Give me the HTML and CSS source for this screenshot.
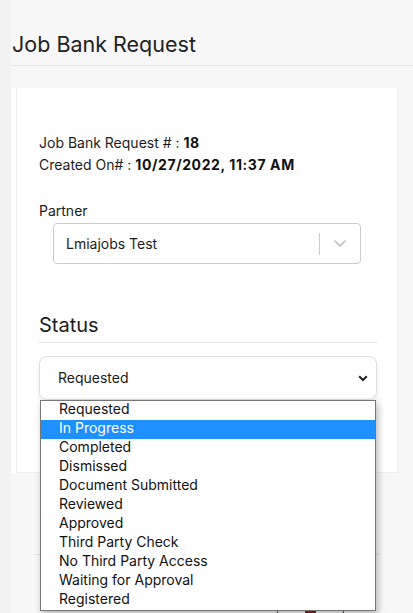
FILE: index.html
```html
<!DOCTYPE html>
<html>
<head>
<meta charset="utf-8">
<link rel="stylesheet" href="styles.css">
</head>
<body>
<div class="layout">
  <div class="sidebar"></div>
  <main class="main">
    <header class="page-header">
      <h1 class="page-title">Job Bank Request</h1>
    </header>
    <section class="panel">
      <div class="card">
        <div class="meta">
          <div class="meta-line">Job Bank Request # : <b>18</b></div>
          <div class="meta-line">Created On# : <b>10/27/2022, 11:37 AM</b></div>
        </div>
        <label class="field-label">Partner</label>
        <div class="partner-select">
          <span class="partner-value">Lmiajobs Test</span>
          <span class="partner-sep"></span>
          <span class="partner-arrow">
            <svg width="14" height="9" viewBox="0 0 14 9"><polyline points="1.5,1.5 7,7 12.5,1.5" fill="none" stroke="#cccccc" stroke-width="2.2"/></svg>
          </span>
        </div>
        <h2 class="section-title">Status</h2>
        <div class="status-wrap">
          <div class="status-select">
            <span class="status-value">Requested</span>
            <svg class="status-arrow" width="10" height="7" viewBox="0 0 10 7"><polyline points="1.2,1.2 5,5 8.8,1.2" fill="none" stroke="#222" stroke-width="2"/></svg>
          </div>
          <ul class="status-list">
            <li class="opt">Requested</li>
            <li class="opt opt-active">In Progress</li>
            <li class="opt">Completed</li>
            <li class="opt">Dismissed</li>
            <li class="opt">Document Submitted</li>
            <li class="opt">Reviewed</li>
            <li class="opt">Approved</li>
            <li class="opt">Third Party Check</li>
            <li class="opt">No Third Party Access</li>
            <li class="opt">Waiting for Approval</li>
            <li class="opt">Registered</li>
          </ul>
        </div>
      </div>
    </section>
    <section class="lower">
      <hr class="lower-rule">
      <div class="actions">
        <span class="btn-outline"><span class="btn-mark"></span></span>
      </div>
    </section>
  </main>
</div>
</body>
</html>
```
FILE: styles.css
```css
* { box-sizing: border-box; }
html, body { margin: 0; padding: 0; }
body {
  background: #f7f7f7;
  font-family: Inter, "Noto Sans", sans-serif;
  color: #1c1c1c;
  width: 413px;
  height: 613px;
  overflow: hidden;
}
.layout { display: flex; min-height: 613px; }
.sidebar { width: 11px; background: #f2f2f2; flex: none; }
.main { flex: 1; min-width: 0; }
.page-header {
  height: 66px;
  border-bottom: 1px solid #e5e5e5;
  display: flex;
  align-items: flex-end;
}
.page-title {
  margin: 0 0 7px 1px;
  font-size: 21.5px;
  font-weight: 400;
  line-height: 28px;
  color: #222;
}
.panel {
  margin-top: 22px;
  margin-right: 15px;
  background: #fff;
  padding-left: 5px;
  border-right: 1px solid #eeeeee;
}
.card {
  height: 385px;
  border-left: 1px solid #eeeeee;
  border-bottom: 1px solid #eeeeee;
  padding: 44px 20px 0 22px;
}
.meta-line { font-size: 14px; line-height: 22px; }
.meta-line b { font-weight: 700; color: #111; letter-spacing: 0.6px; }
.field-label {
  display: block;
  margin-top: 24px;
  font-size: 14px;
  line-height: 22px;
}
.partner-select {
  margin: 1px 0 0 14px;
  width: 308px;
  height: 41px;
  border: 1px solid #cccccc;
  border-radius: 4px;
  display: flex;
  align-items: center;
}
.partner-value { flex: 1; padding-left: 12px; font-size: 14px; }
.partner-sep { width: 1px; height: 22px; background: #cccccc; }
.partner-arrow {
  width: 40px;
  display: flex;
  justify-content: center;
  align-items: center;
}
.section-title {
  margin: 49px 0 0 0;
  font-size: 20px;
  font-weight: 400;
  line-height: 24px;
  padding-bottom: 5px;
  border-bottom: 1px solid #e5e5e5;
}
.status-wrap { position: relative; margin-top: 13px; }
.status-select {
  height: 44px;
  border: 1px solid #dedede;
  border-radius: 8px;
  box-shadow: 0 3px 6px rgba(0,0,0,0.08);
  display: flex;
  align-items: center;
  padding: 0 8px 2px 18px;
}
.status-value { flex: 1; font-size: 14px; }
.status-arrow { margin-top: 2px; }
.status-list {
  position: absolute;
  left: 1px;
  right: 1px;
  top: 44px;
  margin: 0;
  padding: 0;
  list-style: none;
  background: #fff;
  border: 1px solid #767676;
  box-shadow: 2px 3px 7px rgba(0,0,0,0.28);
  z-index: 5;
}
.opt {
  height: 19px;
  line-height: 15px;
  padding: 0 0 4px 18px;
  font-size: 14px;
  color: #111;
}
.opt-active { background: #1e90ff; color: #fff; }
.lower { padding: 81px 33px 0 23px; }
.lower-rule { margin: 0; border: 0; border-top: 1px solid #e5e5e5; }
.actions { display: flex; justify-content: flex-end; margin-top: 54px; padding-right: 36px; }
.btn-outline {
  width: 67px;
  height: 30px;
  border: 1px solid #b32020;
  border-radius: 3px;
  display: flex;
  justify-content: center;
}
.btn-mark { width: 11px; height: 6px; background: #9b1c1c; }
```
